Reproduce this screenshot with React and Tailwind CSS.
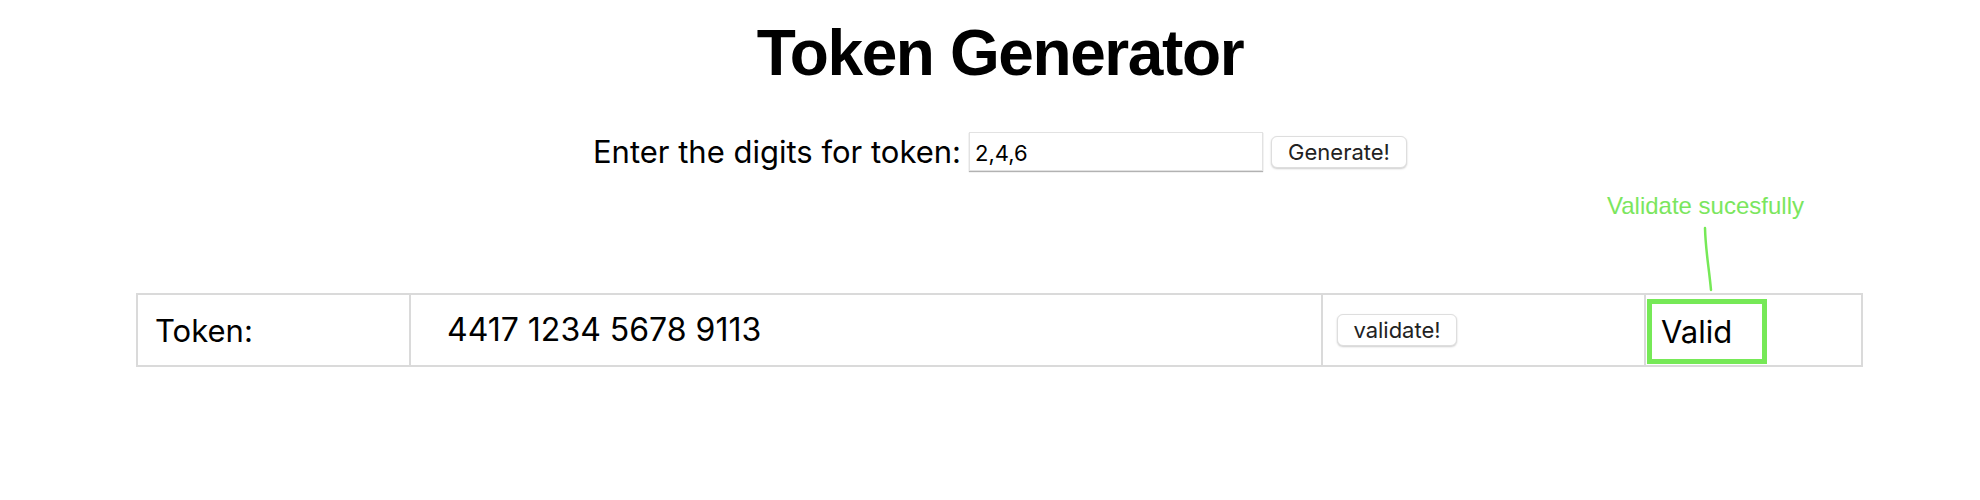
export default function App() {
  return (
    <div className="w-full h-[500px] bg-white text-black">
      <h1 className="pt-[21px] pl-[20px] text-center font-['Liberation_Sans',Arial,sans-serif] font-bold text-[64px] leading-none tracking-[-1.4px]">
        Token Generator
      </h1>

      <div className="mt-[47px] pl-[20px] flex justify-center items-center gap-2 font-['Inter',sans-serif]">
        <label className="text-[31px] leading-none">Enter the digits for token:</label>
        <input
          defaultValue="2,4,6"
          className="w-[294px] h-[39px] pl-[5px] pt-[2px] text-[22px] border border-[#e2e2e2] shadow-[0_1px_1px_rgba(0,0,0,0.3)] outline-none bg-white"
        />
        <button className="w-[136px] h-[32px] rounded-[6px] bg-white border border-[#dedede] shadow-[0_1px_2px_rgba(0,0,0,0.2)] text-[22px] text-[#222] leading-none">
          Generate!
        </button>
      </div>

      <div className="relative mt-[122px] ml-[136px] w-[1727px] font-['Inter',sans-serif]">
        <div className="absolute left-[1471px] top-[-99px] whitespace-nowrap font-['Liberation_Sans',Arial,sans-serif] text-[24px] leading-none text-[#7be65e]">
          Validate sucesfully
        </div>
        <svg className="absolute left-[1564px] top-[-67px]" width="16" height="68" viewBox="0 0 16 68">
          <path d="M5 2 C 5.5 24, 9 42, 11 64" fill="none" stroke="#76e957" strokeWidth="2.5" strokeLinecap="round" />
        </svg>
        <div className="grid grid-cols-[271px_912px_323px_1fr] h-[74px] border-2 border-[#dadada]">
          <div className="flex items-center pl-[17px] text-[31px] leading-none">Token:</div>
          <div className="flex items-center pl-[36px] border-l-2 border-[#dadada] text-[32px] leading-none">
            4417 1234 5678 9113
          </div>
          <div className="flex items-center pl-[14px] border-l-2 border-[#dadada]">
            <button className="w-[120px] h-[32px] rounded-[6px] bg-white border border-[#dedede] shadow-[0_1px_2px_rgba(0,0,0,0.2)] text-[22px] text-[#222] leading-none">
              validate!
            </button>
          </div>
          <div className="flex items-center pl-[1px] border-l-2 border-[#dadada]">
            <div className="flex items-center w-[120px] h-[65px] mt-[2px] border-[5px] border-[#76e957] pl-[9px] text-[31px] leading-none">
              Valid
            </div>
          </div>
        </div>
      </div>
    </div>
  );
}
